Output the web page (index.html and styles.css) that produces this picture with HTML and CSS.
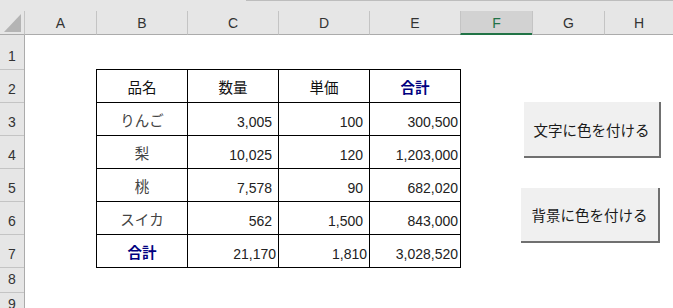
FILE: index.html
```html
<!DOCTYPE html>
<html lang="ja">
<head>
<meta charset="utf-8">
<title>Sheet</title>
<link rel="stylesheet" href="styles.css">
</head>
<body>
<div class="app">
  <div class="topstrip"><div class="topline"></div></div>
  <div class="colheads">
    <div class="corner">
      <svg class="tri" width="24" height="24" viewBox="0 0 24 24"><polygon points="21,3 21,21 4,21" fill="#b4b4b4"/></svg>
    </div>
    <div class="colh w72">A</div>
    <div class="colh w91">B</div>
    <div class="colh w91">C</div>
    <div class="colh w91">D</div>
    <div class="colh w91">E</div>
    <div class="colh w72 sel">F</div>
    <div class="colh w72">G</div>
    <div class="colh grow">H</div>
  </div>
  <div class="body">
    <div class="rowheads">
      <div class="rowh r34 first">1</div>
      <div class="rowh r33">2</div>
      <div class="rowh r33">3</div>
      <div class="rowh r33">4</div>
      <div class="rowh r33">5</div>
      <div class="rowh r33">6</div>
      <div class="rowh r33">7</div>
      <div class="rowh r25">8</div>
      <div class="rowh r25">9</div>
    </div>
    <div class="cells">
      <div class="table">
        <div class="cell name hd">品名</div>
        <div class="cell name hd">数量</div>
        <div class="cell name hd">単価</div>
        <div class="cell name total">合計</div>

        <div class="cell name">りんご</div>
        <div class="cell num pl">3,005</div>
        <div class="cell num pl">100</div>
        <div class="cell num ps">300,500</div>

        <div class="cell name">梨</div>
        <div class="cell num pl">10,025</div>
        <div class="cell num pl">120</div>
        <div class="cell num ps">1,203,000</div>

        <div class="cell name">桃</div>
        <div class="cell num pl">7,578</div>
        <div class="cell num pl">90</div>
        <div class="cell num ps">682,020</div>

        <div class="cell name">スイカ</div>
        <div class="cell num pl">562</div>
        <div class="cell num pl">1,500</div>
        <div class="cell num ps">843,000</div>

        <div class="cell name total">合計</div>
        <div class="cell num ps">21,170</div>
        <div class="cell num ps">1,810</div>
        <div class="cell num ps">3,028,520</div>
      </div>
    </div>
  </div>
  <div class="btn btn1">文字に色を付ける</div>
  <div class="btn btn2">背景に色を付ける</div>
</div>
</body>
</html>
```
FILE: styles.css
```css
* { box-sizing: border-box; }
html, body { margin: 0; padding: 0; background: #fff; }
body {
  width: 673px;
  height: 308px;
  overflow: hidden;
  font-family: "Liberation Sans", "Noto Sans CJK JP", sans-serif;
  font-size: 14px;
  color: #222;
}
.app {
  position: relative;
  width: 673px;
  height: 308px;
  display: flex;
  flex-direction: column;
  overflow: hidden;
}
.topstrip {
  height: 11px;
  flex-shrink: 0;
  background: #e6e6e6;
  display: flex;
}
.topline {
  margin-left: 246px;
  flex: 1;
  border-top: 1px solid #bdbdbd;
}
.colheads {
  height: 24px;
  flex-shrink: 0;
  display: flex;
  background: #e6e6e6;
}
.corner {
  width: 24px;
  height: 24px;
  border-bottom: 1px solid #ababab;
}
.tri { display: block; }
.colh {
  height: 24px;
  border-left: 1px solid #c4c4c4;
  border-bottom: 1px solid #ababab;
  display: flex;
  align-items: center;
  justify-content: center;
  color: #333;
  font-size: 14px;
  padding-top: 1px;
}
.colh.w72 { width: 72px; }
.colh.w91 { width: 91px; }
.colh.grow { flex: 1; }
.colh.sel {
  background: #d2d2d2;
  color: #217346;
  border-bottom: 2px solid #217346;
}
.body {
  flex: 1;
  min-height: 0;
  display: flex;
  overflow: hidden;
}
.rowheads {
  width: 25px;
  flex-shrink: 0;
  background: #e6e6e6;
  border-right: 1px solid #ababab;
  display: flex;
  flex-direction: column;
}
.rowh {
  border-top: 1px solid #c4c4c4;
  display: flex;
  align-items: flex-end;
  justify-content: center;
  line-height: 17px;
  padding-bottom: 4px;
  color: #333;
  font-size: 14px;
  flex-shrink: 0;
}
.rowh.first { border-top: none; }
.r34 { height: 34px; }
.r33 { height: 33px; }
.r25 { height: 25px; }
.cells {
  flex: 1;
  background: #fff;
}
.table {
  margin-left: 71px;
  margin-top: 34px;
  width: 365px;
  display: grid;
  grid-template-columns: repeat(4, 91px);
  grid-auto-rows: 33px;
  border-right: 1px solid #000;
  border-bottom: 1px solid #000;
}
.cell {
  border-left: 1px solid #000;
  border-top: 1px solid #000;
  display: flex;
  line-height: 17px;
}
.name {
  align-items: center;
  justify-content: center;
  font-family: "Noto Sans CJK JP", sans-serif;
  font-size: 14.5px;
  color: #444;
}
.name.hd { color: #111; }
.name.total {
  color: #000080;
  font-weight: bold;
}
.num {
  align-items: flex-end;
  justify-content: flex-end;
  padding-bottom: 4px;
  color: #222;
}
.pl { padding-right: 6px; }
.ps { padding-right: 2px; }
.btn {
  position: absolute;
  background: #f0f0f0;
  border-right: 2px solid #707070;
  border-bottom: 2px solid #707070;
  display: flex;
  align-items: center;
  justify-content: center;
  font-family: "Noto Sans CJK JP", sans-serif;
  font-size: 14.5px;
  color: #1a1a1a;
}
.btn1 { left: 524px; top: 102px; width: 137px; height: 56px; }
.btn2 { left: 521px; top: 188px; width: 139px; height: 55px; }
```
